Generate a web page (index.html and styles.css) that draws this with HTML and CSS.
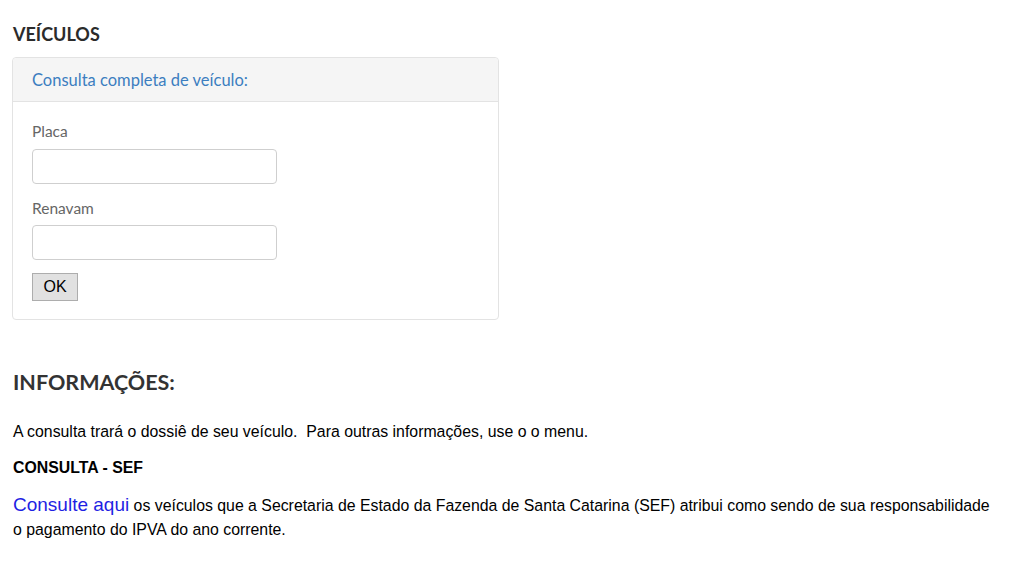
FILE: index.html
```html
<!DOCTYPE html>
<html lang="pt-BR">
<head>
<meta charset="utf-8">
<title>Veículos</title>
<link rel="stylesheet" href="styles.css">
</head>
<body>
<main class="page">
  <h2 class="title">VEÍCULOS</h2>
  <section class="panel">
    <div class="panel-heading">Consulta completa de veículo:</div>
    <form class="panel-body">
      <div class="form-group">
        <label class="label" for="placa">Placa</label>
        <input class="input" id="placa" type="text">
      </div>
      <div class="form-group form-group-last">
        <label class="label" for="renavam">Renavam</label>
        <input class="input" id="renavam" type="text">
      </div>
      <button class="btn" type="button">OK</button>
    </form>
  </section>
  <h3 class="info-title">INFORMAÇÕES:</h3>
  <p class="text">A consulta trará o dossiê de seu veículo.&nbsp; Para outras informações, use o o menu.</p>
  <p class="text strong">CONSULTA - SEF</p>
  <p class="text lines"><a class="link" href="#">Consulte aqui</a> os veículos que a Secretaria de Estado da Fazenda de Santa Catarina (SEF) atribui como sendo de sua responsabilidade o pagamento do IPVA do ano corrente.</p>
</main>
</body>
</html>
```
FILE: styles.css
```css
html, body {
  margin: 0;
  padding: 0;
  background: #fff;
}
.page {
  padding: 21px 12px 0 12px;
  font-family: "Liberation Sans", Arial, sans-serif;
  color: #000;
}
.title {
  font-family: Lato, sans-serif;
  font-weight: 700;
  font-size: 18px;
  line-height: 26px;
  color: #2b2b2b;
  margin: 0 0 10px 1px;
}
.panel {
  width: 485px;
  border: 1px solid #e3e3e3;
  border-radius: 4px;
  background: #fff;
}
.panel-heading {
  background: #f5f5f5;
  border-bottom: 1px solid #e3e3e3;
  border-radius: 4px 4px 0 0;
  height: 44px;
  box-sizing: border-box;
  padding: 10px 19px 0 19px;
  font-family: Lato, sans-serif;
  font-size: 16.5px;
  line-height: 24px;
  color: #3c7ec0;
}
.panel-body {
  padding: 19px 19px 18px 19px;
  display: flex;
  flex-direction: column;
  align-items: flex-start;
}
.form-group {
  display: flex;
  flex-direction: column;
  margin-bottom: 14px;
}
.form-group-last {
  margin-bottom: 13px;
}
.form-group-last .label {
  margin-bottom: 7px;
}
.label {
  font-family: Lato, sans-serif;
  font-size: 15.5px;
  line-height: 20px;
  color: #666;
  margin-bottom: 8px;
}
.input {
  width: 245px;
  height: 35px;
  box-sizing: border-box;
  border: 1px solid #cfcfcf;
  border-radius: 4px;
  padding: 6px 12px;
  margin: 0;
  font-size: 14px;
  background: #fff;
}
.btn {
  width: 46px;
  height: 28px;
  box-sizing: border-box;
  border: 1px solid #adadad;
  background: #e1e1e1;
  border-radius: 0;
  font-family: "Liberation Sans", Arial, sans-serif;
  font-size: 16px;
  color: #000;
  padding: 0;
  margin: 0;
}
.info-title {
  font-family: Lato, sans-serif;
  font-weight: 700;
  font-size: 21.5px;
  line-height: 28px;
  color: #333;
  margin: 48px 0 0 1px;
}
.text {
  font-size: 15.85px;
  line-height: 24px;
  margin: 24px 0 0 1px;
}
.strong {
  font-weight: 700;
  margin-top: 12px;
}
.lines {
  margin-top: 14px;
  max-width: 985px;
}
.link {
  color: #1f1fe3;
  text-decoration: none;
  font-size: 19px;
  line-height: 20px;
}
```
